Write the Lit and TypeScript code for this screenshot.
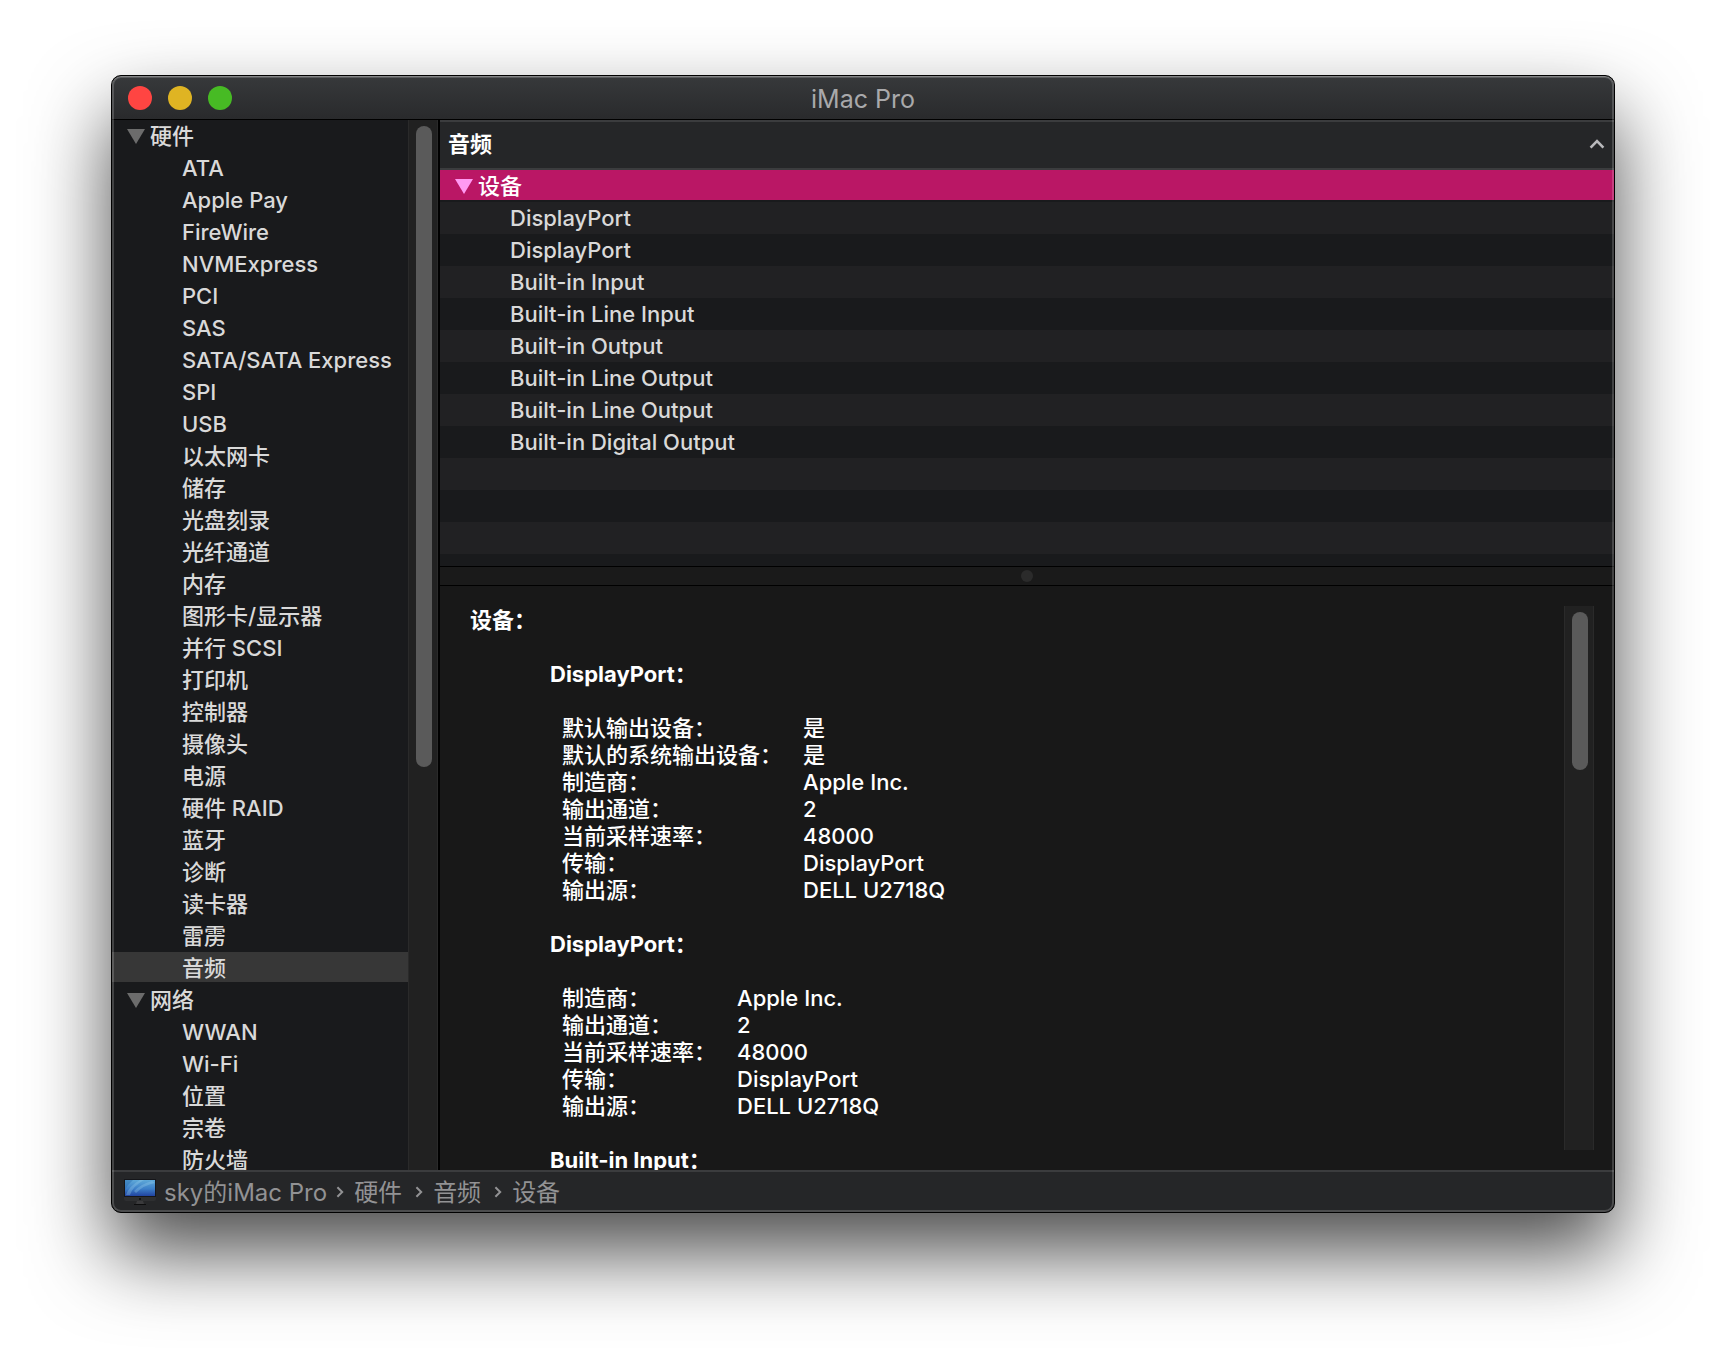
import { LitElement, html, css, svg } from "lit";
import { customElement, state } from "lit/decorators.js";
import { classMap } from "lit/directives/class-map.js";

interface Category {
  name: string;
  items: string[];
}

interface DeviceSection {
  name: string;
  props: [string, string][];
}

const CATEGORIES: Category[] = [
  {
    name: "硬件",
    items: [
      "ATA", "Apple Pay", "FireWire", "NVMExpress", "PCI", "SAS", "SATA/SATA Express", "SPI", "USB",
      "以太网卡", "储存", "光盘刻录", "光纤通道", "内存", "图形卡/显示器", "并行 SCSI", "打印机",
      "控制器", "摄像头", "电源", "硬件 RAID", "蓝牙", "诊断", "读卡器", "雷雳", "音频",
    ],
  },
  { name: "网络", items: ["WWAN", "Wi-Fi", "位置", "宗卷", "防火墙"] },
];

const DEVICES = [
  "DisplayPort", "DisplayPort", "Built-in Input", "Built-in Line Input", "Built-in Output",
  "Built-in Line Output", "Built-in Line Output", "Built-in Digital Output",
];

const SECTIONS: DeviceSection[] = [
  {
    name: "DisplayPort",
    props: [
      ["默认输出设备", "是"],
      ["默认的系统输出设备", "是"],
      ["制造商", "Apple Inc."],
      ["输出通道", "2"],
      ["当前采样速率", "48000"],
      ["传输", "DisplayPort"],
      ["输出源", "DELL U2718Q"],
    ],
  },
  {
    name: "DisplayPort",
    props: [
      ["制造商", "Apple Inc."],
      ["输出通道", "2"],
      ["当前采样速率", "48000"],
      ["传输", "DisplayPort"],
      ["输出源", "DELL U2718Q"],
    ],
  },
  { name: "Built-in Input", props: [] },
];

const reset = css`
  * { box-sizing: border-box; }
  button {
    font: inherit;
    color: inherit;
    background: none;
    border: 0;
    margin: 0;
    padding: 0;
    text-align: left;
  }
  ul { list-style: none; margin: 0; padding: 0; }
`;

const triangle = html`<svg class="triangle" width="18" height="15" viewBox="0 0 18 15" aria-hidden="true">
  ${svg`<path d="M0 0H18L9 15Z" fill="currentColor"/>`}
</svg>`;

@customElement("side-bar")
export class SideBar extends LitElement {
  static styles = [reset, css`
    :host { display: flex; min-height: 0; background: #191a1c; }
    .tree { flex: 1; min-width: 0; overflow: hidden; color: #d9d9d9; }
    .row { display: flex; align-items: center; width: 100%; height: 32px; line-height: 32px; white-space: nowrap; }
    .group { padding-left: 15px; gap: 5px; }
    .leaf { padding-left: 70px; }
    .leaf.selected { background: linear-gradient(#373737 0 30px, transparent 30px); }
    .triangle { color: #6c6c6c; }
    .track { width: 30px; padding: 6px 6px 0 7px; background: #212121; border: solid #2a2a2a; border-width: 0 1px; }
    .thumb { width: 16px; height: 61.4%; border-radius: 8px; background: #5a5a5a; }
  `];

  @state() private selected = "音频";

  render() {
    return html`
      <ul class="tree">
        ${CATEGORIES.map((c) => html`
          <li>
            <button class="row group" aria-expanded="true">${triangle}${c.name}</button>
            <ul>
              ${c.items.map((i) => html`<li>
                <button class=${classMap({ row: true, leaf: true, selected: i === this.selected })}
                  @click=${() => (this.selected = i)}>${i}</button>
              </li>`)}
            </ul>
          </li>`)}
      </ul>
      <div class="track"><div class="thumb"></div></div>
    `;
  }
}

@customElement("device-list")
export class DeviceList extends LitElement {
  static styles = [reset, css`
    :host { display: flex; flex-direction: column; min-height: 0; overflow: hidden; }
    .head {
      flex: none; display: flex; align-items: center; justify-content: space-between;
      width: 100%; height: 50px; padding: 0 9px 2px 8px; color: #fff; font-weight: 700;
      background: #252628; border: solid #3b3c3e; border-width: 2px 0;
    }
    .rows {
      flex: 1; min-height: 0; overflow: hidden; color: #d9d9d9;
      background: repeating-linear-gradient(#191a1c 0 32px, #212123 32px 64px);
    }
    .row { display: flex; align-items: center; width: 100%; height: 32px; line-height: 32px; padding-left: 70px; white-space: nowrap; }
    .parent {
      padding-left: 15px; gap: 5px; color: #fff;
      background: linear-gradient(#ba1765 0 30px, transparent 30px);
    }
    .triangle { color: #ff99f2; }
  `];

  render() {
    return html`
      <button class="head">音频
        <svg width="16" height="10" viewBox="0 0 16 10" aria-hidden="true">
          <path d="M1.6 8.6 8 2.2 14.4 8.6" fill="none" stroke="#b9b9bc" stroke-width="2.6"/>
        </svg>
      </button>
      <ul class="rows">
        <li>
          <button class="row parent" aria-expanded="true">${triangle}设备</button>
          <ul>${DEVICES.map((d) => html`<li><button class="row">${d}</button></li>`)}</ul>
        </li>
      </ul>
    `;
  }
}

@customElement("device-details")
export class DeviceDetails extends LitElement {
  static styles = [reset, css`
    :host { display: flex; min-height: 0; padding: 20px 20px 0 30px; background: #181818; color: #fff; line-height: 27px; }
    .body { flex: 1; min-width: 0; overflow: hidden; padding-top: 1px; }
    h2, h3 { margin: 0 0 27px; font: inherit; font-weight: 700; }
    section { padding-left: 80px; }
    table { border-collapse: collapse; margin: 0 0 27px 12px; }
    th, td { padding: 0; font-weight: 500; text-align: left; white-space: nowrap; }
    th { padding-right: 21px; }
    .track { width: 30px; margin-bottom: 20px; padding: 6px 6px 0 7px; background: #212121; border: solid #2a2a2a; border-width: 0 1px; }
    .thumb { width: 16px; height: 29.3%; border-radius: 8px; background: #5a5a5a; }
  `];

  render() {
    return html`
      <div class="body">
        <h2>设备：</h2>
        ${SECTIONS.map((s) => html`
          <section>
            <h3>${s.name}：</h3>
            <table>
              <tbody>
                ${s.props.map(([k, v]) => html`<tr><th scope="row">${k}：</th><td>${v}</td></tr>`)}
              </tbody>
            </table>
          </section>`)}
      </div>
      <div class="track"><div class="thumb"></div></div>
    `;
  }
}

@customElement("path-bar")
export class PathBar extends LitElement {
  static styles = [reset, css`
    :host {
      display: flex; align-items: center; height: 42px; padding-left: 12px; font-weight: 400;
      background: #252628; border-top: 2px solid #3b3c3e; color: #929294; font-size: 24px; line-height: 40px;
    }
    a { color: inherit; text-decoration: none; white-space: nowrap; padding-top: 1px; }
    .icon { margin-right: 8px; }
    .chevron { margin: 0 10px 0 9px; }
    .crumb { padding-right: 4px; }
  `];

  render() {
    return html`
      <svg class="icon" width="32" height="28" viewBox="0 0 32 28" aria-hidden="true">
        <defs>
          <linearGradient id="screen" x1="0" y1="0" x2="0" y2="1">
            <stop offset="0" stop-color="#5fa9d8"/><stop offset=".55" stop-color="#3c7fc8"/><stop offset="1" stop-color="#2143a0"/>
          </linearGradient>
        </defs>
        <path d="M0 1H32V21Q32 23 30 23H2Q0 23 0 21Z" fill="#2e2f31"/>
        <path d="M0 1H32V19H0Z" fill="#15161a"/>
        <path d="M1 2H31V18H1Z" fill="url(#screen)"/>
        <path d="M2 17Q5 8 16 2H20Q9 8 6 17Z" fill="#9fd4f0" opacity=".3"/>
        <path d="M10 13Q17 6 28 3L31 5Q20 7 12 15Z" fill="#9fd4f0" opacity=".3"/>
        <path d="M1 2H9Q4 6 1 12Z" fill="#2463a8" opacity=".4"/>
        <circle cx="16" cy="21" r="1" fill="#0c0c0d"/>
        <path d="M13 23H19L20 26H12Z" fill="#3a3a3c"/>
        <path d="M10 26H22V27H10Z" fill="#0c0c0d"/>
      </svg>
      <a href="#">sky的iMac Pro</a>
      ${["硬件", "音频", "设备"].map((c) => html`
        <svg class="chevron" width="8" height="12" viewBox="0 0 8 12" aria-hidden="true">
          <path d="M1.4 1.2 6.2 6 1.4 10.8" fill="none" stroke="#929294" stroke-width="2"/>
        </svg>
        <a class="crumb" href="#">${c}</a>`)}
    `;
  }
}

@customElement("app-root")
export class AppRoot extends LitElement {
  static styles = [reset, css`
    :host {
      display: flex; height: 100vh; padding: 75px 111px 147px; background: #fff; box-sizing: border-box;
      font: 500 22px/32px Inter, "Noto Sans CJK SC", sans-serif;
    }
    .window {
      position: relative; flex: 1; min-width: 0; display: flex; flex-direction: column; overflow: hidden;
      border: 1px solid #000; border-radius: 10px; background: #181818;
      box-shadow: 0 40px 80px rgba(0, 0, 0, 0.7);
    }
    .window::after {
      content: ""; position: absolute; inset: 0; border-radius: 9px; pointer-events: none;
      box-shadow: inset 0 1px 0 rgba(255, 255, 255, 0.25), inset 0 0 0 2px rgba(255, 255, 255, 0.18);
    }
    .title {
      flex: none; display: grid; grid-template-columns: 1fr auto 1fr; align-items: center; height: 44px;
      padding: 0 16px; border-bottom: 1px solid #000; background: linear-gradient(#37393b, #292a2c);
    }
    h1 { margin: 0; padding-top: 2px; font-size: 25px; font-weight: 400; color: #a9a9ab; }
    .lights { display: flex; gap: 16px; }
    .light { width: 24px; height: 24px; border-radius: 50%; }
    .close { background: #ff4542; }
    .minimize { background: #dfb423; }
    .zoom { background: #47bb24; }
    .main { flex: 1; min-height: 0; display: grid; grid-template-columns: 326px minmax(0, 1fr); }
    .panes {
      display: grid; grid-template-rows: minmax(0, 13fr) 20px minmax(0, 17fr); min-height: 0;
      border-left: 2px solid #000;
    }
    .splitter { display: grid; place-items: center; border: solid #000; border-width: 1px 0; background: #1a1a1a; }
    .grip { width: 12px; height: 12px; border-radius: 50%; background: #2b2b2b; }
  `];

  render() {
    return html`
      <div class="window">
        <header class="title">
          <div class="lights">
            <button class="light close" aria-label="关闭"></button>
            <button class="light minimize" aria-label="最小化"></button>
            <button class="light zoom" aria-label="缩放"></button>
          </div>
          <h1>iMac Pro</h1>
        </header>
        <div class="main">
          <side-bar></side-bar>
          <div class="panes">
            <device-list></device-list>
            <div class="splitter"><div class="grip"></div></div>
            <device-details></device-details>
          </div>
        </div>
        <path-bar></path-bar>
      </div>
    `;
  }
}
